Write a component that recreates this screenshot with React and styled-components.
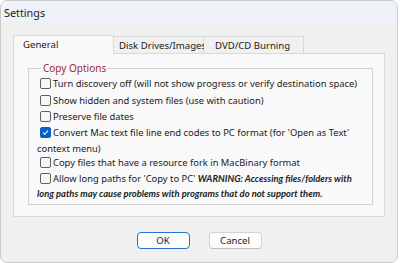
import React from "react";
import styled, { createGlobalStyle } from "styled-components";

const Global = createGlobalStyle`
  html, body { margin: 0; padding: 0; background: #ffffff; }
  body { font-family: "Noto Sans", "Open Sans", sans-serif; font-size: 9.4px; color: #1b1b1b; }
  * { box-sizing: border-box; }
`;

const Window = styled.div`
  width: 398px;
  height: 263px;
  border: 1px solid #cbcbcb;
  border-radius: 7px;
  background: #f0f0f0;
  overflow: hidden;
  display: flex;
  flex-direction: column;
`;

const TitleBar = styled.div`
  height: 20px;
  flex: none;
  background: #eef3fa;
  display: flex;
  align-items: center;
  padding: 2px 0 0 3px;
  font-size: 10.8px;
`;

const Body = styled.div`
  flex: 1;
  padding: 14px 12px 0 12px;
  display: flex;
  flex-direction: column;
`;

const Tabs = styled.div`
  display: flex;
  align-items: flex-end;
  height: 18px;
  flex: none;
`;

const Tab = styled.div`
  position: relative;
  z-index: ${p => (p.$active ? 1 : 0)};
  width: ${p => p.$w}px;
  height: ${p => (p.$active ? 19 : 17)}px;
  margin-bottom: ${p => (p.$active ? -1 : 0)}px;
  padding: 0 0 ${p => (p.$active ? 1 : 0)}px ${p => p.$pad}px;
  background: ${p => (p.$active ? "#f9f9f9" : "#f0f0f0")};
  border-top: 1px solid #d9d9d9;
  border-right: 1px solid #d9d9d9;
  border-left: ${p => (p.$first ? "1px solid #d9d9d9" : "none")};
  display: flex;
  align-items: center;
  white-space: nowrap;
  font-size: 9.6px;
`;

const Panel = styled.div`
  width: 372px;
  height: 164px;
  flex: none;
  background: #f9f9f9;
  border: 1px solid #d9d9d9;
  padding: 8px 0 0 14px;
`;

const Group = styled.fieldset`
  width: 345px;
  height: 143px;
  margin: 0;
  border: 1px solid #d3d3d3;
  padding: 0 0 0 8px;
`;

const Legend = styled.legend`
  color: #9e2a36;
  font-size: 10px;
  padding: 0 2px;
  margin-left: 4px;
  line-height: 12px;
`;

const Row = styled.div`
  line-height: ${p => p.$lh || 16}px;
  margin-top: ${p => p.$mt || 0}px;
  text-indent: 3px;
  white-space: nowrap;
`;

const Box = styled.span`
  display: inline-block;
  width: 11px;
  height: 11px;
  border: 1px solid ${p => (p.$checked ? "#0a5ec4" : "#5f5f5f")};
  background: ${p => (p.$checked ? "#0a5ec4" : "#f7f7f7")};
  border-radius: 2px;
  vertical-align: -2px;
  margin-right: 2px;
  text-indent: 0;
  position: relative;
`;

const Warn = styled.span`
  font-family: Lato, "Noto Sans", sans-serif;
  font-weight: bold;
  font-style: italic;
  font-size: 9.4px;
`;

const Buttons = styled.div`
  display: flex;
  justify-content: center;
  gap: 19px;
  margin-top: 15px;
`;

const Button = styled.button`
  width: 53px;
  height: 17px;
  font-family: inherit;
  font-size: 9.6px;
  color: #1b1b1b;
  background: #fdfdfd;
  border: 1px solid ${p => (p.$primary ? "#2a6fcb" : "#d2d2d2")};
  border-bottom-color: ${p => (p.$primary ? "#2a6fcb" : "#bdbdbd")};
  border-radius: 4px;
  padding: 0;
  line-height: 15px;
`;

function Check({ checked }) {
  return (
    <Box $checked={checked}>
      {checked && (
        <svg width="9" height="9" viewBox="0 0 9 9" style={{ position: "absolute", left: 0, top: 0 }}>
          <path d="M2 4.7 L3.8 6.3 L7 2.7" fill="none" stroke="#fff" strokeWidth="1.1" />
        </svg>
      )}
    </Box>
  );
}

export default function App() {
  return (
    <>
      <Global />
      <Window>
        <TitleBar>Settings</TitleBar>
        <Body>
          <Tabs>
            <Tab $active $first $w={101} $pad={9}>General</Tab>
            <Tab $w={90} $pad={5}>Disk Drives/Images</Tab>
            <Tab $w={100} $pad={11}>DVD/CD Burning</Tab>
          </Tabs>
          <Panel>
            <Group>
              <Legend>Copy Options</Legend>
              <Row $mt={2}><Check />Turn discovery off (will not show progress or verify destination space)</Row>
              <Row $mt={1}><Check />Show hidden and system files (use with caution)</Row>
              <Row><Check />Preserve file dates</Row>
              <Row><Check checked />Convert Mac text file line end codes to PC format (for 'Open as Text'<br />context menu)</Row>
              <Row $mt={-2}><Check />Copy files that have a resource fork in MacBinary format</Row>
              <Row $lh={15}><Check />Allow long paths for 'Copy to PC' <Warn>WARNING: Accessing files/folders with<br />long paths may cause problems with programs that do not support them.</Warn></Row>
            </Group>
          </Panel>
          <Buttons>
            <Button $primary>OK</Button>
            <Button>Cancel</Button>
          </Buttons>
        </Body>
      </Window>
    </>
  );
}
